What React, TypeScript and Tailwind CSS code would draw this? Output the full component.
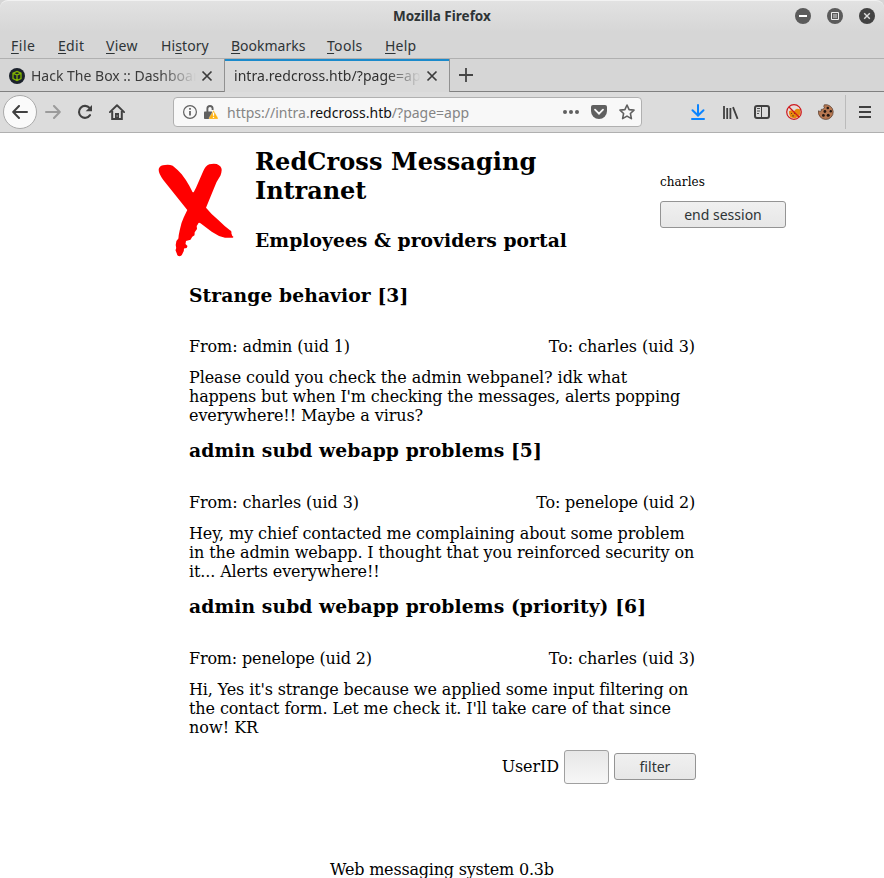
import type { ReactNode } from 'react';

const ui = "font-['Noto_Sans','Open_Sans',sans-serif]";

function MenuItem({ label, at = 0, className }: { label: string; at?: number; className: string }) {
  return (
    <span className={`shrink-0 whitespace-nowrap ${className}`}>
      {label.slice(0, at)}
      <span className="underline decoration-1 underline-offset-2">{label[at]}</span>
      {label.slice(at + 1)}
    </span>
  );
}

function CloseX() {
  return (
    <svg width="12" height="12" viewBox="0 0 12 12" className="shrink-0">
      <path d="M1.5 1.5l9 9M10.5 1.5l-9 9" stroke="#3c3c3c" strokeWidth="1.7" />
    </svg>
  );
}

function Titlebar() {
  return (
    <div className="flex h-8 rounded-t-lg border-t border-[#f2f2f2] bg-gradient-to-b from-[#e2e2e2] to-[#d6d6d6]">
      <div className="w-[393px]" />
      <div className="w-[402px] whitespace-nowrap pt-[5px] text-[13.5px] leading-5 font-bold text-[#2e3436]">Mozilla Firefox</div>
      <div className="flex gap-4 pt-[7px]">
        <svg width="16" height="16" viewBox="0 0 16 16"><circle cx="8" cy="8" r="8" fill="#5b5b5b" /><path d="M4 8h8" stroke="#fff" strokeWidth="2" /></svg>
        <svg width="16" height="16" viewBox="0 0 16 16"><circle cx="8" cy="8" r="8" fill="#5b5b5b" /><path d="M4.5 4.5h7v7h-7z" fill="none" stroke="#eee" /><path d="M6 6h4v4H6z" fill="#999" /></svg>
        <svg width="16" height="16" viewBox="0 0 16 16"><circle cx="8" cy="8" r="8" fill="#434343" /><path d="M5.2 5.2l5.6 5.6M10.8 5.2l-5.6 5.6" stroke="#ddd" strokeWidth="1.4" /></svg>
      </div>
    </div>
  );
}

function Tabs() {
  return (
    <div className="flex h-[34px] border-t border-[#b0b0b0] text-[14px]">
      <div className="flex w-[224px] items-center border-b border-[#808080] pl-[9px]">
        <svg width="16" height="16" viewBox="0 0 16 16" className="mt-px shrink-0">
          <circle cx="8" cy="8" r="8" fill="#1c222c" />
          <path d="M8 3.4l4 1.8v5.4L8 12.5l-4-1.9V5.2zM4 5.2L8 7l4-1.8M8 7v5.5" fill="none" stroke="#83b600" strokeWidth="1.3" />
        </svg>
        <div className="ml-[6px] w-[165px] overflow-hidden whitespace-nowrap text-[#3b3b3b] [mask-image:linear-gradient(to_right,black_78%,transparent)]">Hack The Box :: Dashboard</div>
        <div className="mt-px ml-[5px]"><CloseX /></div>
      </div>
      <div className="flex w-[226px] items-center border-x border-[#919191] bg-[#d9d9d9] pl-[9px] shadow-[inset_0_2px_0_#1b8acb]">
        <div className="w-[187px] overflow-hidden whitespace-nowrap tracking-[0.05px] text-[#303030] [mask-image:linear-gradient(to_right,black_81%,transparent)]">intra.redcross.htb/?page=app</div>
        <div className="ml-[5px]"><CloseX /></div>
      </div>
      <div className="flex grow items-center border-b border-[#808080] pl-[9px]">
        <svg width="14" height="14" viewBox="0 0 14 14"><path d="M7 0v14M0 7h14" stroke="#454545" strokeWidth="1.8" /></svg>
      </div>
    </div>
  );
}

function AddressBar() {
  return (
    <div className="ml-[48px] flex h-[30px] w-[469px] shrink-0 items-center rounded-[4px] border border-[#b0b0b0] bg-[#f8f8f8] pl-[9px]">
      <svg width="14" height="14" viewBox="0 0 14 14"><circle cx="7" cy="7" r="6.4" fill="none" stroke="#606060" strokeWidth="1.2" /><path d="M7 6v4.5M7 3v1.8" stroke="#606060" strokeWidth="1.7" /></svg>
      <svg width="16" height="16" viewBox="0 0 16 16" className="ml-[7px]">
        <path d="M3.4 9V4.6a2.6 2.6 0 0 1 5.2 0V6" fill="none" stroke="#606060" strokeWidth="1.9" />
        <path d="M.8 7.5H8V15H.8q-.8 0-.8-.8V8.3q0-.8.8-.8z" fill="#606060" />
        <path d="M9.5 6.3L14 14q.3 1-.6 1H5.6q-.9 0-.6-1z" fill="#ffb211" stroke="#f8f8f8" strokeWidth=".3" />
        <path d="M9.5 8.6v3.2m0 .9v1.3" stroke="#fff" strokeWidth="1.3" />
      </svg>
      <div className="ml-[7px] w-[336px] whitespace-nowrap text-[14px] text-[#858585]">https://intra.<span className="text-[#111]">redcross.htb</span>/?page=app</div>
      <svg width="16" height="4" viewBox="0 0 16 4" fill="#606060"><circle cx="2" cy="2" r="2" /><circle cx="8" cy="2" r="2" /><circle cx="14" cy="2" r="2" /></svg>
      <svg width="16" height="14" viewBox="0 0 16 14" className="ml-[12px]"><path d="M2 0h12q2 0 2 2v4a8 8 0 0 1-16 0V2q0-2 2-2z" fill="#606060" /><path d="M4 4.7l4 4 4-4" fill="none" stroke="#f8f8f8" strokeWidth="1.8" strokeLinecap="round" /></svg>
      <svg width="16" height="16" viewBox="0 0 16 16" className="ml-[12px]"><path d="M8 1l2.1 4.6 4.9.5-3.6 3.4 1 5.1L8 12.1l-4.4 2.5 1-5.1L1 6.1l4.9-.5z" fill="none" stroke="#606060" strokeWidth="1.6" strokeLinejoin="round" /></svg>
    </div>
  );
}

function Toolbar() {
  return (
    <div className="flex h-[41px] items-center border-b border-[#b0b0b0] bg-[#dcdcdc] pl-[3px]">
      <div className="flex size-[34px] shrink-0 items-center justify-center rounded-full border border-[#aaa] bg-[#fafafa]">
        <svg width="16" height="14" viewBox="0 0 16 14"><path d="M15 7H1.5M7 1L1.2 7 7 13" fill="none" stroke="#404040" strokeWidth="2" strokeLinecap="round" strokeLinejoin="round" /></svg>
      </div>
      <svg width="16" height="14" viewBox="0 0 16 14" className="ml-2 shrink-0"><path d="M1 7h13.5M9 1l5.8 6L9 13" fill="none" stroke="#9b9b9b" strokeWidth="2" strokeLinecap="round" strokeLinejoin="round" /></svg>
      <svg width="16" height="16" viewBox="0 0 16 16" className="ml-4 shrink-0"><path d="M13 11.2A6 6 0 1 1 12.6 4" fill="none" stroke="#404040" strokeWidth="2.1" strokeLinecap="round" /><path d="M15 .9v6.3H8.7z" fill="#404040" /></svg>
      <svg width="16" height="16" viewBox="0 0 16 16" className="ml-4 shrink-0"><path d="M.9 8.1L8 1.3l7.1 6.8" fill="none" stroke="#404040" strokeWidth="1.9" strokeLinecap="round" strokeLinejoin="round" /><path d="M3.2 7v8h9.6V7" fill="none" stroke="#404040" strokeWidth="2" /><path d="M6 9h4v6H6z" fill="#404040" /><path d="M7.6 11.5h1v1h-1z" fill="#ddd" /></svg>
      <AddressBar />
      <svg width="14" height="16" viewBox="0 0 14 16" className="ml-[49px] shrink-0"><path d="M7 1v10M1.5 6.3L7 11.5l5.5-5.2M1 15h12" fill="none" stroke="#0a84ff" strokeWidth="2" strokeLinecap="round" /></svg>
      <svg width="16" height="15" viewBox="0 0 16 15" className="ml-[18px] shrink-0"><path d="M1 1v13M4.2 3v11M7.4 3v11M10 2.2l4.6 11.6" fill="none" stroke="#404040" strokeWidth="1.8" /></svg>
      <svg width="16" height="14" viewBox="0 0 16 14" className="ml-[15px] shrink-0"><rect x="1" y="1" width="14" height="12" rx="2" fill="none" stroke="#404040" strokeWidth="2" /><path d="M7.5 1v12" stroke="#404040" /><path d="M3 3.5h3M3 6h3M3 8.5h2" stroke="#404040" strokeWidth=".9" /></svg>
      <svg width="16" height="16" viewBox="0 0 16 16" className="ml-4 shrink-0">
        <circle cx="8" cy="8" r="7" fill="#e6dcd8" />
        <path d="M3 7.2l2-1 3 1 1.5-1.7L11 4.7l3 .5.6 4L13 12l-4 2.5-4.5-1.3L3.2 10z" fill="#e8870c" />
        <path d="M5 9.5h1m2 0h1m-3 2.4h2" stroke="#6a4518" />
        <circle cx="8" cy="8" r="7.3" fill="none" stroke="#cf171c" strokeWidth="1.2" /><path d="M3 3l10 10" stroke="#cf171c" strokeWidth="1.2" />
      </svg>
      <svg width="16" height="16" viewBox="0 0 16 16" className="ml-4 shrink-0">
        <path d="M6.3.8a7.4 7.4 0 1 1-5.8 6Q2 8 3.4 7L3.2 5.4l1.6-.2L6.6 4 5.8 2.4z" fill="#b77851" stroke="#5f4435" strokeWidth=".8" />
        <g fill="#231813"><circle cx="9.8" cy="4" r="1.3" /><circle cx="6.9" cy="7.5" r="1.4" /><circle cx="12.8" cy="7.3" r="1.2" /><circle cx="10.2" cy="11.2" r="1.5" /><circle cx="5.4" cy="11.4" r="1.4" /></g>
      </svg>
      <div className="ml-[11px] h-[34px] w-px shrink-0 bg-[#bbb]" />
      <svg width="12" height="12" viewBox="0 0 12 12" className="ml-[13px] shrink-0"><path d="M0 1h12M0 6h12M0 11h12" stroke="#404040" strokeWidth="2" /></svg>
    </div>
  );
}

function Button({ children, className }: { children: ReactNode; className: string }) {
  return <button className={`h-[27px] shrink-0 rounded-[3px] border border-[#949494] bg-gradient-to-b from-[#f0f0f0] to-[#e7e7e7] text-[14px] leading-[25px] text-[#2e3436] ${ui} ${className}`}>{children}</button>;
}

const messages = [
  {
    title: 'Strange behavior [3]', box: 'h-[155px]', row: 'mt-[31px]',
    from: { text: 'admin (uid 1)', track: 'tracking-[-0.1px]' },
    to: { text: 'charles (uid 3)', track: 'tracking-[-0.06px]' },
    lines: [
      { text: 'Please could you check the admin webpanel? idk what', track: 'tracking-[-0.08px]' },
      { text: "happens but when I'm checking the messages, alerts popping", track: 'tracking-[-0.17px]' },
      { text: 'everywhere!! Maybe a virus?', track: 'tracking-[-0.09px]' },
    ],
  },
  {
    title: 'admin subd webapp problems [5]', box: 'h-[156px]', row: 'mt-8',
    from: { text: 'charles (uid 3)', track: 'tracking-[-0.09px]' },
    to: { text: 'penelope (uid 2)', track: 'tracking-[-0.16px]' },
    lines: [
      { text: 'Hey, my chief contacted me complaining about some problem', track: 'tracking-[-0.09px]' },
      { text: 'in the admin webapp. I thought that you reinforced security on', track: 'tracking-[-0.12px]' },
      { text: 'it... Alerts everywhere!!', track: 'tracking-[-0.12px]' },
    ],
  },
  {
    title: 'admin subd webapp problems (priority) [6]', box: 'h-[154px]', row: 'mt-8',
    from: { text: 'penelope (uid 2)', track: 'tracking-[-0.17px]' },
    to: { text: 'charles (uid 3)', track: 'tracking-[-0.06px]' },
    lines: [
      { text: "Hi, Yes it's strange because we applied some input filtering on", track: 'tracking-[-0.13px]' },
      { text: "the contact form. Let me check it. I'll take care of that since", track: 'tracking-[-0.1px]' },
      { text: 'now! KR', track: 'tracking-normal' },
    ],
  },
];

export default function App() {
  return (
    <div className="h-[878px] w-[884px] overflow-hidden bg-white">
      <header className={`bg-[#d6d6d6] ${ui}`}>
        <Titlebar />
        <nav className="flex h-[26px] pt-[4px] pl-[11px] text-[14px] leading-5 text-[#2e3436]">
          <MenuItem label="File" className="w-[47px] tracking-[0.5px]" />
          <MenuItem label="Edit" className="w-[48px] tracking-[0.3px]" />
          <MenuItem label="View" className="w-[55px] tracking-[0.3px]" />
          <MenuItem label="History" at={2} className="w-[70px] tracking-[0.1px]" />
          <MenuItem label="Bookmarks" className="w-[96px]" />
          <MenuItem label="Tools" className="w-[58px] tracking-[0.3px]" />
          <MenuItem label="Help" className="w-[50px] tracking-[0.2px]" />
        </nav>
        <Tabs />
        <Toolbar />
      </header>
      <main className="font-['DejaVu_Serif',serif] text-base leading-[19px] text-black">
        <div className="flex h-[151px] pl-[158px]">
          <svg width="76" height="94" viewBox="0 0 76 94" className="mt-[30px] w-[76px] shrink-0">
            <path d="M1 5.3Q2.5 2 7 2q4-.8 7.7.7 4.5 3.5 9 8.6 5 6.500 7.600 11.400L34.500 29q.8.700 1.300 0L38 24.700 45.300 8q2-5 6-6.700 4-1 7.400-.3 5 2 5 6-.2 3-1.200 5.500Q58 19 56 25.300L48 44.700Q54 52 60.300 57q6 6 11.700 10.300 2 1 1.300 2.700l1 3q2 1 .4 1.700H67q-7-1.500-13.300-6L42.500 60.200q-2-1-2.500.8l-1.300 2 .3 3-2.300 3.300-.2 3-2.200 1.400-1.800 3L28 78l-.5 3 2 2-.8 2-2.700.5-.2 2.500-1.100 2.300q-1 3-3.400 3-2 0-2.600-3l-1.200-3 .7-2.300-.5-3 .7-4 2-2.500.3-3.300 1-5Q23 60 25.700 54.500L29.300 47 18.700 33.700 5.300 17Q-.5 9 1 5.300z" fill="#f00" />
          </svg>
          <div className="w-[405px] pl-[21px] whitespace-nowrap">
            <h1 className="mt-[14px] text-[24px] leading-[29px] font-bold tracking-[0.1px]">RedCross Messaging<br /><span className="tracking-[-0.05px]">Intranet</span></h1>
            <h2 className="mt-[24px] text-[18.72px] leading-[22px] font-bold tracking-[0.06px]">Employees &amp; providers portal</h2>
          </div>
          <div className="pl-[21px] pt-[42px]">
            <div className="text-[12px] leading-[14px] tracking-[0.08px]">charles</div>
            <Button className="mt-3 w-[126px]">end session</Button>
          </div>
        </div>
        <div className="ml-[189px] w-[507px]">
          {messages.map((m) => (
            <article key={m.title} className={m.box}>
              <h3 className="text-[18.72px] leading-[22px] font-bold tracking-[0.1px] whitespace-nowrap">{m.title}</h3>
              <div className={`flex w-[506px] justify-between ${m.row}`}>
                <span className={m.from.track}>From: {m.from.text}</span>
                <span className={m.to.track}>To: {m.to.text}</span>
              </div>
              <div className="mt-3">{m.lines.map((line) => <p key={line.text} className={`whitespace-nowrap ${line.track}`}>{line.text}</p>)}</div>
            </article>
          ))}
          <form className="flex h-[35px] items-center justify-end pt-px">
            <label htmlFor="user-id" className="mr-[5px] pb-[2px] tracking-[-0.1px]">UserID</label>
            <input id="user-id" className="mr-[5px] h-[34px] w-[45px] rounded-[3px] border border-[#a0a0a0] bg-gradient-to-b from-[#e7e7e7] to-[#f7f7f7]" />
            <Button className="mb-px w-[82px]">filter</Button>
          </form>
        </div>
        <footer className="mt-[76px] pl-[330px] tracking-[-0.2px] whitespace-nowrap">Web messaging system 0.3b</footer>
      </main>
    </div>
  );
}
